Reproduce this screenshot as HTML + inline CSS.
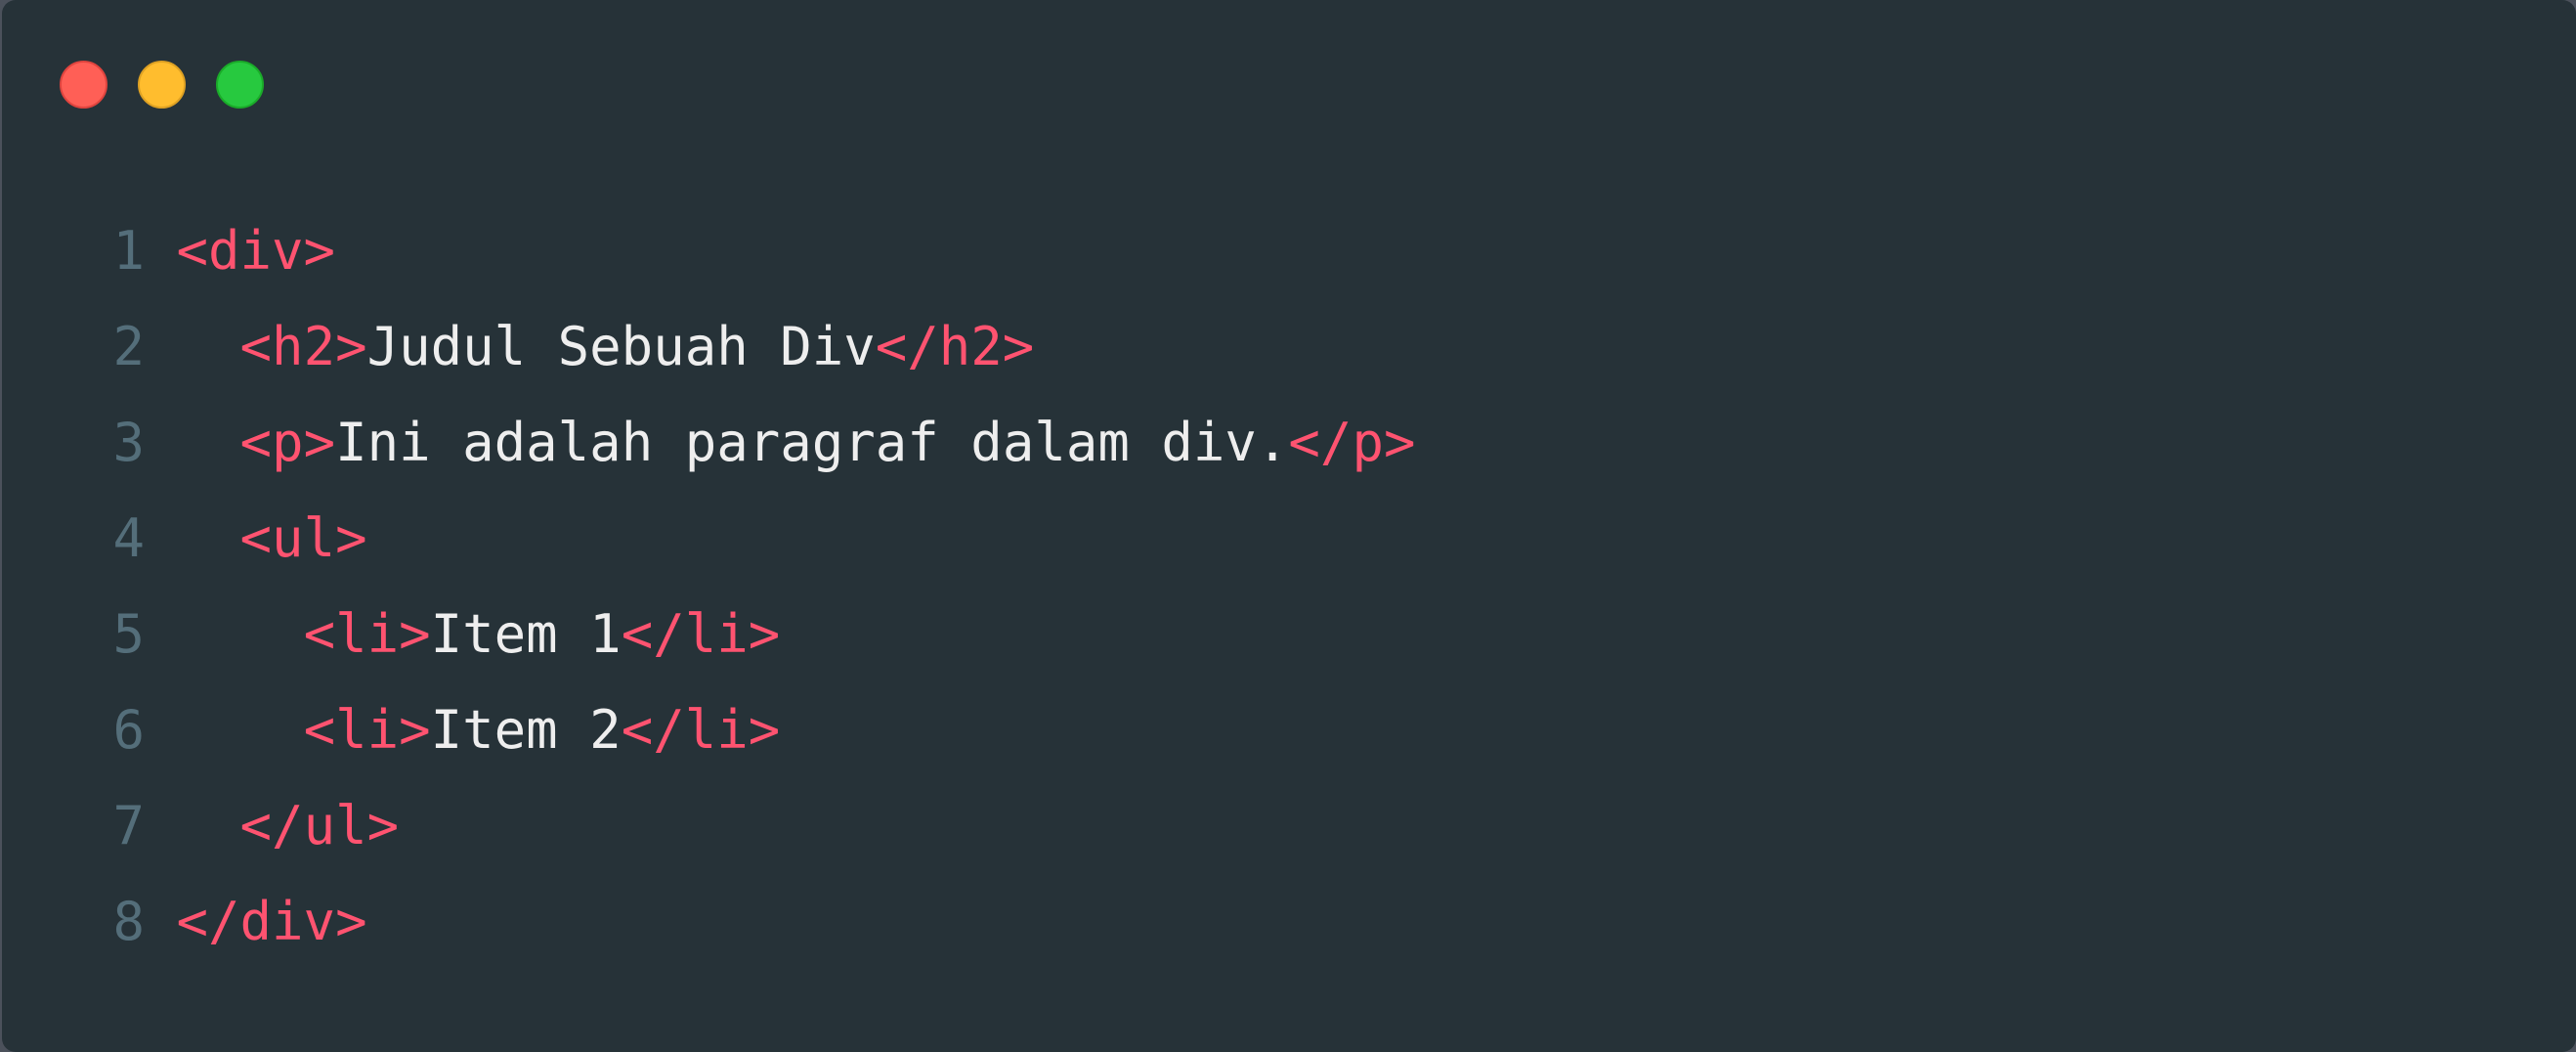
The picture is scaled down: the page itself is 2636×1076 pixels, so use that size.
<!DOCTYPE html>
<html><head><meta charset="utf-8"><style>
html,body{margin:0;padding:0;width:2636px;height:1076px;background:#4b515b;overflow:hidden}
.win{position:absolute;left:2px;top:0;width:2634px;height:1076px;background:#263238;border-radius:14px}
.dot{position:absolute;top:62px;width:49px;height:49px;border-radius:50%;box-sizing:border-box}
pre{position:absolute;left:-2px;top:208px;margin:0;font-family:"DejaVu Sans Mono","Liberation Mono",monospace;font-size:54px;line-height:98px;color:#eeeeee}
.n{color:#546e7a;display:inline-block;width:148px;text-align:right}
.t{color:#ff5370}
</style></head><body>
<div class="win">
<div class="dot" style="left:59px;background:#ff5f56;border:2px solid #e0443e"></div>
<div class="dot" style="left:139px;background:#ffbd2e;border:2px solid #dea123"></div>
<div class="dot" style="left:219px;background:#27c93f;border:2px solid #1aab29"></div>
<pre><span class="n">1</span> <span class="t">&lt;div&gt;</span>
<span class="n">2</span>   <span class="t">&lt;h2&gt;</span>Judul Sebuah Div<span class="t">&lt;/h2&gt;</span>
<span class="n">3</span>   <span class="t">&lt;p&gt;</span>Ini adalah paragraf dalam div.<span class="t">&lt;/p&gt;</span>
<span class="n">4</span>   <span class="t">&lt;ul&gt;</span>
<span class="n">5</span>     <span class="t">&lt;li&gt;</span>Item 1<span class="t">&lt;/li&gt;</span>
<span class="n">6</span>     <span class="t">&lt;li&gt;</span>Item 2<span class="t">&lt;/li&gt;</span>
<span class="n">7</span>   <span class="t">&lt;/ul&gt;</span>
<span class="n">8</span> <span class="t">&lt;/div&gt;</span></pre>
</div>
</body></html>
